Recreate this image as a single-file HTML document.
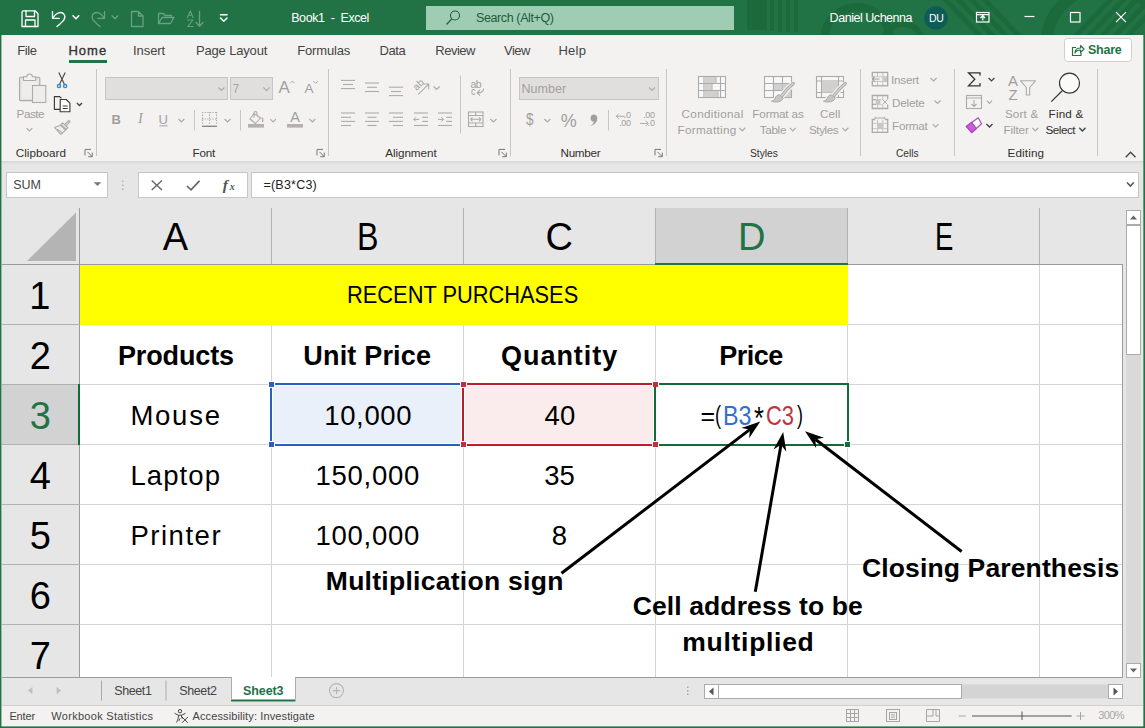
<!DOCTYPE html>
<html><head><meta charset="utf-8"><title>Book1 - Excel</title>
<style>
*{box-sizing:border-box;margin:0;padding:0}
html,body{width:1145px;height:728px;overflow:hidden;background:#f3f2f1}
body{font-family:"Liberation Sans",sans-serif;position:relative;color:#262626}
.abs,.t{position:absolute}
.t{white-space:pre;line-height:1;transform-origin:0 0}
#title{left:0;top:0;width:1145px;height:35px;background:#217346}
#tabs{left:0;top:35px;width:1145px;height:32px;background:#f3f2f1}
#ribbon{left:0;top:67px;width:1145px;height:94px;background:#f3f2f1}
#fbar{left:0;top:161px;width:1145px;height:48px;background:#e6e6e6}
#lb{left:0;top:35px;width:2px;height:693px;background:linear-gradient(90deg,#217346 0,#217346 1px,rgba(33,115,70,.45) 1px)}
#rb{left:1143px;top:35px;width:2px;height:693px;background:linear-gradient(90deg,rgba(33,115,70,.65) 0,rgba(33,115,70,.65) 1px,#217346 1px)}
#bb{left:0;top:726px;width:1145px;height:2px;background:linear-gradient(180deg,rgba(33,115,70,.6) 0,rgba(33,115,70,.6) 1px,#217346 1px)}
.w{color:#fff}
.g{color:#a6a6a6}
.box{position:absolute;background:#fff;border:1px solid #c6c6c6}
.sep{position:absolute;width:1px;background:#c8c8c8}
#grid{left:2px;top:209px;width:1121px;height:468px;background:#fff;overflow:hidden}
.hl{position:absolute;height:1px;background:#d4d4d4;left:79px;width:1044px}
.vl{position:absolute;width:1px;background:#d4d4d4;top:264px;height:413px}
.ch{position:absolute;top:209px;height:55px;background:#e6e6e6;border-right:1px solid #ababab}
.rh{position:absolute;left:2px;width:78px;height:60px;background:#e6e6e6;border-bottom:1px solid #ababab;border-right:1px solid #ababab}
.cell{font-family:"Liberation Sans",sans-serif;color:#000}
</style></head><body>
<div class="abs" id="title"></div>
<div class="abs" id="tabs"></div>
<div class="abs" id="ribbon"></div>
<div class="abs" id="fbar"></div>
<div class="abs" id="grid"></div>
<div class="abs" style="left:2px;top:208px;width:1121px;height:57px;background:#e6e6e6"></div>
<div class="abs" style="left:2px;top:264px;width:78px;height:413px;background:#e6e6e6"></div>
<div class="abs" style="left:656px;top:208px;width:191px;height:57px;background:#d2d2d2"></div>
<div class="abs" style="left:2px;top:385px;width:77px;height:59px;background:#d2d2d2"></div>
<!-- grid lines -->
<div class="hl" style="top:324px"></div><div class="hl" style="top:384px"></div><div class="hl" style="top:444px"></div>
<div class="hl" style="top:504px"></div><div class="hl" style="top:564px"></div><div class="hl" style="top:624px"></div>
<div class="vl" style="left:271px;top:324px;height:353px"></div><div class="vl" style="left:463px;top:324px;height:353px"></div>
<div class="vl" style="left:655px;top:324px;height:353px"></div><div class="vl" style="left:847px"></div><div class="vl" style="left:1039px"></div>
<div class="abs" style="left:80px;top:265px;width:768px;height:60px;background:#ffff00"></div>
<!-- header lines -->
<div class="abs" style="left:2px;top:264px;width:1121px;height:1px;background:#9b9b9b"></div>
<div class="abs" style="left:79px;top:208px;width:1px;height:469px;background:#9b9b9b"></div>
<div class="abs" style="left:271px;top:208px;width:1px;height:56px;background:#b1b1b1"></div>
<div class="abs" style="left:463px;top:208px;width:1px;height:56px;background:#b1b1b1"></div>
<div class="abs" style="left:655px;top:208px;width:1px;height:56px;background:#b1b1b1"></div>
<div class="abs" style="left:847px;top:208px;width:1px;height:56px;background:#b1b1b1"></div>
<div class="abs" style="left:1039px;top:208px;width:1px;height:56px;background:#b1b1b1"></div>
<div class="abs" style="left:2px;top:324px;width:78px;height:1px;background:#b1b1b1"></div>
<div class="abs" style="left:2px;top:384px;width:78px;height:1px;background:#b1b1b1"></div>
<div class="abs" style="left:2px;top:444px;width:78px;height:1px;background:#b1b1b1"></div>
<div class="abs" style="left:2px;top:504px;width:78px;height:1px;background:#b1b1b1"></div>
<div class="abs" style="left:2px;top:564px;width:78px;height:1px;background:#b1b1b1"></div>
<div class="abs" style="left:2px;top:624px;width:78px;height:1px;background:#b1b1b1"></div>
<!-- selected header accents -->
<div class="abs" style="left:655px;top:263px;width:193px;height:2px;background:#217346"></div>
<div class="abs" style="left:78px;top:384px;width:2px;height:61px;background:#126b38"></div>
<!-- B3 / C3 / D3 -->
<div class="abs" style="left:270px;top:383px;width:194px;height:63px;background:#e9f0fa;border:2px solid #2a5fc1;box-shadow:inset 0 0 0 1px #fff"></div>
<div class="abs" style="left:462px;top:383px;width:194px;height:63px;background:#faebec;border:2px solid #b81f2b;box-shadow:inset 0 0 0 1px #fff"></div>
<div class="abs" style="left:654px;top:383px;width:195px;height:63px;background:#fff;border:2px solid #126b38"></div>
<div class="abs" style="left:268px;top:381px;width:7px;height:7px;background:#2a5fc1;border:1px solid #fff"></div>
<div class="abs" style="left:268px;top:441px;width:7px;height:7px;background:#2a5fc1;border:1px solid #fff"></div>
<div class="abs" style="left:460px;top:381px;width:7px;height:7px;background:#c0303a;border:1px solid #fff"></div>
<div class="abs" style="left:460px;top:441px;width:7px;height:7px;background:#c0303a;border:1px solid #fff"></div>
<div class="abs" style="left:652px;top:381px;width:7px;height:7px;background:#c0303a;border:1px solid #fff"></div>
<div class="abs" style="left:652px;top:441px;width:7px;height:7px;background:#c0303a;border:1px solid #fff"></div>
<div class="abs" style="left:654px;top:387px;width:2px;height:54px;background:#126b38"></div>
<div class="abs" style="left:844px;top:441px;width:7px;height:7px;background:#126b38;border:1px solid #fff"></div>
<!-- bottom edge of grid & scrollbars -->
<div class="abs" style="left:2px;top:677px;width:1141px;height:28px;background:#e6e6e6"></div>
<div class="abs" style="left:2px;top:677px;width:1121px;height:1px;background:#9b9b9b"></div>
<div class="abs" style="left:1123px;top:208px;width:20px;height:469px;background:#e6e6e6"></div>
<div class="abs" style="left:1122px;top:264px;width:1px;height:414px;background:#9b9b9b"></div>
<div class="abs" style="left:1126px;top:210px;width:15px;height:15px;background:#fff;border:1px solid #ababab"></div>
<div class="abs" style="left:1126px;top:225px;width:15px;height:130px;background:#fff;border:1px solid #ababab"></div>
<div class="abs" style="left:1126px;top:355px;width:15px;height:308px;background:#d9d9d9"></div>
<div class="abs" style="left:1126px;top:663px;width:15px;height:15px;background:#fff;border:1px solid #ababab"></div>
<svg class="abs" style="left:0;top:0;overflow:hidden" width="1145" height="35" viewBox="0 0 1145 35" fill="none"><!-- title bar pattern -->
<g opacity=".6" stroke="#1a6437" fill="none">
<path d="M757 0v30" stroke-width="20"/><path d="M772 0v31 M780 0v32 M788 0v32 M796 0v32" stroke-width="4"/>
<circle cx="857" cy="40" r="33" stroke-width="8"/>
<circle cx="903" cy="44" r="20" stroke-width="6"/>
<path d="M944 -2 L982 38 M957 -2 L995 38 M970 -2 L1008 38 M983 -2 L1021 38" stroke-width="5"/>
<circle cx="1106" cy="46" r="60" stroke-width="12"/>
<path d="M1072 40 L1112 -2 M1085 40 L1125 -2 M1098 40 L1138 -2 M1111 40 L1151 -2 M1124 40 L1164 -2" stroke-width="5"/>
</g>
</svg>
<svg class="abs" style="left:0;top:0" width="1145" height="728" viewBox="0 0 1145 728" fill="none">
<!-- search box -->
<rect x="426" y="6" width="308" height="24" fill="#9fcdb3"/>
<g stroke="#1e5c3a" stroke-width="1.100"><circle cx="455" cy="15.500" r="4.500"/><path d="M451.800 19 L446.500 24.500"/></g>
<!-- QAT icons -->
<g stroke="#fff" stroke-width="1.300" stroke-linejoin="round" stroke-linecap="round">
<path d="M23.500 10.800 h11.500 l3 3 v12.700 h-16 v-14.200 a1.500 1.500 0 0 1 1.500 -1.500z"/>
<path d="M26 10.800 v5.700 h8.500 v-5.700 M25.500 26.500 v-6.500 h9.500 v6.500"/>
<path d="M52.500 11.500 v6.800 h6.800"/>
<path d="M52.800 18 C55.500 13 61.500 10.500 64.200 14.500 C66.500 18.500 63 21.500 57 26.500"/>
<path d="M73 15.800 l2.900 2.900 l2.900 -2.900" stroke-width="1.500"/>
<path d="M220.500 14.800 h6.500 M220.500 18 l3.250 3.200 l3.250 -3.200" stroke-width="1.500"/>
</g>
<g stroke="#fff" stroke-width="1.300" stroke-linejoin="round" stroke-linecap="round" opacity=".32">
<path d="M104.500 11.500 v6.800 h-6.800"/>
<path d="M104.200 18 C101.500 13 95.500 10.500 92.800 14.500 C90.500 18.500 94 21.500 100 26.500"/>
<path d="M112 15.800 l2.900 2.900 l2.900 -2.900"/>
<path d="M131.500 11.500 h7 l4.500 4.500 v10.500 h-11.500z M138.500 11.500 v4.500 h4.500"/>
<path d="M158.500 23.500 v-10 h5 l1.500 2 h6.500 v2 M158.500 23.500 l3.500 -6 h12 l-3.500 6z"/>
<path d="M199.500 11.500 v14.500 M196 22.500 l3.500 3.800 l3.500 -3.800"/>
<path d="M187.500 17.500 l2.800 -6.500 l2.800 6.500 M188.500 15.300 h3.700 M187.800 20 h5 l-5 6.500 h5.200" stroke-width="1.100"/>
</g>
<!-- window controls -->
<g stroke="#fff" stroke-width="1.200">
<rect x="976.500" y="12.500" width="12.500" height="9.500"/><path d="M976.500 14.700 h12.500 M982.800 20.500 v-4.500 M980.500 18 l2.300 -2.300 l2.300 2.300"/>
<path d="M1024.500 16.500 h10"/>
<rect x="1070.500" y="12.500" width="9.500" height="9.500"/>
<path d="M1116 12.200 l10 10 M1126 12.200 l-10 10"/>
</g>
<circle cx="936" cy="18" r="11.800" fill="#0f5c57"/>
<!-- share -->
<rect x="1064.500" y="38.500" width="67" height="23" rx="3" fill="#fff" stroke="#d2d0ce"/>
<g stroke="#217346" stroke-width="1.200" stroke-linejoin="round"><path d="M1076 47.500 h-3.500 v8 h8.500 v-2.500"/><path d="M1075 53 c0 -3.500 2 -5 5.500 -5 v-2.500 l3.500 3.500 l-3.500 3.500 v-2.500 c-2.500 0 -4.500 0.500 -5.500 3z"/></g>
<!-- home underline -->
<rect x="69" y="60" width="38" height="3" fill="#217346"/>
<path d="M96.5 69 V156" stroke="#c8c6c4" stroke-width="1"/>
<path d="M328.5 69 V156" stroke="#c8c6c4" stroke-width="1"/>
<path d="M510.5 69 V156" stroke="#c8c6c4" stroke-width="1"/>
<path d="M666.5 69 V156" stroke="#c8c6c4" stroke-width="1"/>
<path d="M860.5 69 V156" stroke="#c8c6c4" stroke-width="1"/>
<path d="M954.5 69 V156" stroke="#c8c6c4" stroke-width="1"/>
<path d="M1097.5 69 V156" stroke="#c8c6c4" stroke-width="1"/>
<path d="M194.5 110 V130.5" stroke="#c8c6c4" stroke-width="1"/>
<path d="M240.5 110 V130.5" stroke="#c8c6c4" stroke-width="1"/>
<path d="M608.5 110 V130.5" stroke="#c8c6c4" stroke-width="1"/>
<path d="M460.5 75.5 V133.5" stroke="#c8c6c4" stroke-width="1"/>
<rect x="105.500" y="77.500" width="122" height="22" fill="#e1dfdd" stroke="#c8c6c4"/>
<rect x="230.500" y="77.500" width="42" height="22" fill="#e1dfdd" stroke="#c8c6c4"/>
<rect x="519.500" y="77.500" width="139" height="22" fill="#e1dfdd" stroke="#c8c6c4"/>
<path d="M91.0 149.4 H85.0 V155.4 M87.5 151.9 L92.0 156.4 M92.3 152.6 V156.7 H88.2" stroke="#777" stroke-width="1" fill="none"/>
<path d="M323.0 149.4 H317.0 V155.4 M319.5 151.9 L324.0 156.4 M324.3 152.6 V156.7 H320.2" stroke="#777" stroke-width="1" fill="none"/>
<path d="M505.0 149.4 H499.0 V155.4 M501.5 151.9 L506.0 156.4 M506.3 152.6 V156.7 H502.2" stroke="#777" stroke-width="1" fill="none"/>
<path d="M661.0 149.4 H655.0 V155.4 M657.5 151.9 L662.0 156.4 M662.3 152.6 V156.7 H658.2" stroke="#777" stroke-width="1" fill="none"/>
<path d="M26.5 128.1 L29.4 130.9 L32.3 128.1" stroke="#ababab" stroke-width="1.2" fill="none"/>
<path d="M76.9 103.0 L79.5 105.6 L82.0 103.0" stroke="#444" stroke-width="1.4" fill="none"/>
<path d="M218.5 87.5 L221.4 90.5 L224.4 87.5" stroke="#ababab" stroke-width="1.2" fill="none"/>
<path d="M263.4 87.4 L266.5 90.6 L269.7 87.4" stroke="#ababab" stroke-width="1.2" fill="none"/>
<path d="M178.5 119.0 L181.4 122.0 L184.3 119.0" stroke="#ababab" stroke-width="1.2" fill="none"/>
<path d="M224.6 119.0 L227.6 122.0 L230.5 119.0" stroke="#ababab" stroke-width="1.2" fill="none"/>
<path d="M270.3 119.1 L273.1 121.9 L276.0 119.1" stroke="#ababab" stroke-width="1.2" fill="none"/>
<path d="M309.3 119.0 L312.4 122.0 L315.4 119.0" stroke="#ababab" stroke-width="1.2" fill="none"/>
<path d="M433.6 86.5 L436.6 89.5 L439.7 86.5" stroke="#ababab" stroke-width="1.2" fill="none"/>
<path d="M490.3 119.0 L493.4 122.0 L496.5 119.0" stroke="#ababab" stroke-width="1.2" fill="none"/>
<path d="M649.0 87.5 L652.0 90.5 L655.0 87.5" stroke="#ababab" stroke-width="1.2" fill="none"/>
<path d="M544.3 119.0 L547.3 122.0 L550.4 119.0" stroke="#ababab" stroke-width="1.2" fill="none"/>
<path d="M739.2 127.8 L742.2 130.8 L745.3 127.8" stroke="#ababab" stroke-width="1.2" fill="none"/>
<path d="M789.9 127.8 L792.8 130.8 L795.7 127.8" stroke="#ababab" stroke-width="1.2" fill="none"/>
<path d="M842.3 127.8 L845.3 130.8 L848.4 127.8" stroke="#ababab" stroke-width="1.2" fill="none"/>
<path d="M930.6 78.0 L933.6 81.0 L936.6 78.0" stroke="#ababab" stroke-width="1.2" fill="none"/>
<path d="M934.5 100.5 L937.5 103.5 L940.6 100.5" stroke="#ababab" stroke-width="1.2" fill="none"/>
<path d="M932.7 124.1 L935.6 126.9 L938.5 124.1" stroke="#ababab" stroke-width="1.2" fill="none"/>
<path d="M988.6 78.1 L991.5 80.9 L994.4 78.1" stroke="#444" stroke-width="1.4" fill="none"/>
<path d="M986.9 100.7 L989.5 103.3 L992.0 100.7" stroke="#ababab" stroke-width="1.2" fill="none"/>
<path d="M986.4 124.0 L989.5 127.0 L992.5 124.0" stroke="#444" stroke-width="1.4" fill="none"/>
<path d="M1032.3 127.8 L1035.3 130.8 L1038.4 127.8" stroke="#ababab" stroke-width="1.2" fill="none"/>
<path d="M1079.3 127.8 L1082.4 130.9 L1085.5 127.8" stroke="#444" stroke-width="1.4" fill="none"/>
<path d="M1125.700 157.300 L1130.600 152.300 L1135.500 157.300" stroke="#444" stroke-width="1.300" fill="none"/>
<g stroke="#ababab" stroke-width="1.100"><rect x="19.500" y="77.300" width="20.300" height="23.300" rx="1" fill="#e4e2e0"/><rect x="21.700" y="79.500" width="16" height="19" fill="#efedec" stroke="none"/><path d="M23.500 80.500 v-3.700 h3.300 a2.800 2.800 0 0 1 5.600 0 h3.300 v3.700z" fill="#f3f2f1"/><rect x="32.500" y="85.500" width="13.300" height="17" fill="#efedec"/></g>
<g stroke="#444" stroke-width="1.100" fill="none"><path d="M58.800 72.500 L64.300 84 M65.200 72.500 L59.700 84"/></g><g stroke="#2b88d8" stroke-width="1.300" fill="none"><circle cx="59" cy="86.100" r="1.600"/><circle cx="65.100" cy="86.100" r="1.600"/></g>
<g stroke="#3b3a39" stroke-width="1.150" fill="#f3f2f1" stroke-linejoin="round"><path d="M60 109.300 h-5.600 v-12.700 h5.200 l1.800 1.800"/><path d="M60.200 99.500 h6 l3.700 3.700 v8.600 h-9.700z" fill="#fff"/><path d="M62.700 106 h5 M62.700 108.500 h5" stroke-width="1"/></g>
<g stroke="#ababab" stroke-width="1.100" fill="#e4e2e0" stroke-linejoin="round"><path d="M68.800 120.300 l1.300 1.300 l-4.300 4.600 l-1.500 -1.400z" /><path d="M62.600 122.800 l5.300 4.800 l-1.700 1.900 l-5.300 -4.800z"/><path d="M60.500 125.300 l5.200 4.700 l-4.700 4.400 c-1.500 -1.500 -4.500 -5 -6.500 -6.900z" fill="#efedec"/><path d="M57 129.300 l5.500 3.600" fill="none"/></g>
<path d="M159.300 125.800 H167.700" stroke="#ababab" stroke-width="1.100"/>
<path d="M290.300 83.300 l2.100 -2.200 l2.100 2.200 M313.300 81 l2.400 2.400 l2.400 -2.400" stroke="#ababab" stroke-width="1" fill="none"/>
<g stroke="#ababab" stroke-width="1.100"><path d="M202 112.500 H217 M202 119 H217 M202.500 112 V125 M209.500 112 V125 M216.500 112 V125" stroke-dasharray="1.300 1.300"/><path d="M202 126.300 H217" stroke-width="1.400" stroke="#8a8a8a"/></g>
<g stroke="#ababab" stroke-width="1.100" fill="none" stroke-linejoin="round"><path d="M254 113.500 l6.500 4.500 l-5 5.500 l-5.500 -4.500z"/><path d="M254 117.500 v-4.500 a1.500 1.500 0 0 1 3 0 v2"/><path d="M261.500 117.500 c1.500 1 1.800 2.800 1 4.500"/></g><rect x="248" y="124" width="16" height="3.600" fill="#b3b0ad"/>
<rect x="287" y="124" width="16" height="3.600" fill="#b3b0ad"/>
<path d="M341.0 80.4 H355.0" stroke="#ababab" stroke-width="1.1"/>
<path d="M343.0 84.5 H353.0" stroke="#ababab" stroke-width="1.1"/>
<path d="M341.0 88.6 H355.0" stroke="#ababab" stroke-width="1.1"/>
<path d="M365.0 83.0 H379.0" stroke="#ababab" stroke-width="1.1"/>
<path d="M367.0 87.3 H377.0" stroke="#ababab" stroke-width="1.1"/>
<path d="M365.0 91.5 H379.0" stroke="#ababab" stroke-width="1.1"/>
<path d="M389.0 87.2 H403.0" stroke="#ababab" stroke-width="1.1"/>
<path d="M391.0 91.5 H401.0" stroke="#ababab" stroke-width="1.1"/>
<path d="M389.0 95.6 H403.0" stroke="#ababab" stroke-width="1.1"/>
<path d="M341.0 113.0 H355.0" stroke="#ababab" stroke-width="1.1"/>
<path d="M341.0 117.3 H351.0" stroke="#ababab" stroke-width="1.1"/>
<path d="M341.0 121.4 H355.0" stroke="#ababab" stroke-width="1.1"/>
<path d="M341.0 125.5 H351.0" stroke="#ababab" stroke-width="1.1"/>
<path d="M365.0 113.0 H379.0" stroke="#ababab" stroke-width="1.1"/>
<path d="M367.5 117.3 H376.5" stroke="#ababab" stroke-width="1.1"/>
<path d="M365.0 121.4 H379.0" stroke="#ababab" stroke-width="1.1"/>
<path d="M367.5 125.5 H376.5" stroke="#ababab" stroke-width="1.1"/>
<path d="M389.0 113.0 H403.0" stroke="#ababab" stroke-width="1.1"/>
<path d="M393.0 117.3 H403.0" stroke="#ababab" stroke-width="1.1"/>
<path d="M389.0 121.4 H403.0" stroke="#ababab" stroke-width="1.1"/>
<path d="M393.0 125.5 H403.0" stroke="#ababab" stroke-width="1.1"/>
<path d="M414.0 113.0 H428.0" stroke="#ababab" stroke-width="1.1"/>
<path d="M422.2 117.3 H428.0" stroke="#ababab" stroke-width="1.1"/>
<path d="M422.2 121.4 H428.0" stroke="#ababab" stroke-width="1.1"/>
<path d="M414.0 125.5 H428.0" stroke="#ababab" stroke-width="1.1"/>
<path d="M438.0 113.0 H452.0" stroke="#ababab" stroke-width="1.1"/>
<path d="M446.2 117.3 H452.0" stroke="#ababab" stroke-width="1.1"/>
<path d="M446.2 121.4 H452.0" stroke="#ababab" stroke-width="1.1"/>
<path d="M438.0 125.5 H452.0" stroke="#ababab" stroke-width="1.1"/>
<path d="M413.800 119.400 h5.500 m-5.500 0 l2.200 -2.200 m-2.200 2.200 l2.200 2.200 M438 119.400 h5.500 m0 0 l-2.200 -2.200 m2.200 2.200 l-2.200 2.200" stroke="#ababab" stroke-width="1" fill="none"/>
<path d="M418.300 94.300 L428.600 84.200 M423.500 84 h5.200 v5.200" stroke="#ababab" stroke-width="1.100" fill="none"/>
<path d="M477.300 92.800 c3.500 0.300 6.200 -1 6.300 -4.300 M480 90 l-2.800 2.800 l2.800 2.800" stroke="#ababab" stroke-width="1.100" fill="none"/>
<g stroke="#ababab" stroke-width="1.100" fill="none"><rect x="468.500" y="112" width="14.500" height="14.500"/><path d="M468.500 115.500 h14.500 M468.500 123 h14.500 M475.700 112 v3.500 M475.700 123 v3.500 M470.500 119.300 h10.500 m-10.500 0 l2 -2 m-2 2 l2 2 m8.500 -2 l-2 -2 m2 2 l-2 2"/></g>
<path d="M616.200 116.300 h8.500 m-8.500 0 l2.600 -2.600 m-2.600 2.600 l2.600 2.600 M640 123.400 h8.300 m0 0 l-2.600 -2.600 m2.600 2.600 l-2.600 2.600" stroke="#ababab" stroke-width="1" fill="none"/>
<path d="M593.500 114.400 a3.700 3.700 0 0 1 3.800 3.900 c0 4 -3 6.800 -7.300 8 c2.200 -1.500 3.600 -3 3.900 -4.600 a3.700 3.700 0 0 1 -0.400 -7.300z" fill="#a19f9d"/>
<g stroke="#ababab" stroke-width="1.100" fill="#f7f7f7"><rect x="698.5" y="76.5" width="27" height="21"/><path d="M704.0 76.5 v21 M720.5 76.5 v21 M698.5 83.5 h27 M698.5 90.5 h27 "/></g>
<path d="M704.500 77 h11 v6 h-11z M704.500 84 h7 v6 h-7z M704.500 91 h13 v6 h-13z" fill="#d2d0ce"/>
<path d="M716 77 v6.500 M712 84 v6.500 M718 91 v6" stroke="#ababab" stroke-width="1"/>
<g stroke="#ababab" stroke-width="1.100" fill="#f7f7f7"><rect x="764.5" y="76.5" width="27" height="21"/><path d="M773.5 76.5 v21 M782.5 76.5 v21 M764.5 83.5 h27 M764.5 90.5 h27 "/></g>
<path d="M774 84 h8.500 v6 h-8.500z M783 84 h8 v6 h-8z M783 91 h8 v6 h-8z" fill="#d2d0ce"/>
<g stroke="#ababab" stroke-width="1.100" fill="#f7f7f7"><rect x="816.5" y="76.5" width="27" height="21"/><path d="M821.5 76.5 v21 M838.5 76.5 v21 M816.5 81.0 h27 M816.5 92.5 h27 "/></g>
<path d="M822 81.500 h16 v11 h-16z" fill="#d2d0ce"/>
<g transform="translate(0 0)"><path d="M793 84 Q787 89 781 97" stroke="#f3f2f1" stroke-width="6" fill="none"/><path d="M779 95 l4 3.500 c-1.500 4 -7 5 -12 3 z" fill="#f3f2f1" stroke="#f3f2f1" stroke-width="2.500"/><path d="M793.300 83.500 Q786.500 89 781.300 96.500" stroke="#ababab" stroke-width="3.400" fill="none" stroke-linecap="round"/><path d="M793.300 83.500 Q786.500 89 781.300 96.500" stroke="#d4d2d0" stroke-width="1.500" fill="none" stroke-linecap="round"/><path d="M779.300 94.800 l4 3.300 c-1.500 3.800 -6.500 4.700 -11.800 3.200 c2.500 -0.600 3.300 -1.800 3.800 -3.300 c0.600 -1.800 2 -3 4 -3.200z" fill="#c8c6c4" stroke="#ababab" stroke-width="1"/></g>
<g transform="translate(52 0)"><path d="M793 84 Q787 89 781 97" stroke="#f3f2f1" stroke-width="6" fill="none"/><path d="M779 95 l4 3.500 c-1.500 4 -7 5 -12 3 z" fill="#f3f2f1" stroke="#f3f2f1" stroke-width="2.500"/><path d="M793.300 83.500 Q786.500 89 781.300 96.500" stroke="#ababab" stroke-width="3.400" fill="none" stroke-linecap="round"/><path d="M793.300 83.500 Q786.500 89 781.300 96.500" stroke="#d4d2d0" stroke-width="1.500" fill="none" stroke-linecap="round"/><path d="M779.300 94.800 l4 3.300 c-1.500 3.800 -6.500 4.700 -11.800 3.200 c2.500 -0.600 3.300 -1.800 3.800 -3.300 c0.600 -1.800 2 -3 4 -3.200z" fill="#c8c6c4" stroke="#ababab" stroke-width="1"/></g>
<g fill="none"><path d="M877.500 72.500 v13.500 M882.800 72.500 v13.500 M872.500 76.800 h15 M872.500 81.500 h15" stroke="#c8c6c4" stroke-width="1"/><rect x="883.300" y="77.300" width="4" height="3.800" fill="#c8c6c4"/><rect x="872.300" y="72.400" width="15.400" height="13.400" stroke="#ababab" stroke-width="1.300"/><rect x="871" y="77.300" width="10" height="3.400" fill="#f3f2f1"/><path d="M872.300 79 h7.200 m-7.200 0 l2.300 -2.300 m-2.300 2.300 l2.300 2.300" stroke="#a19f9d" stroke-width="1.200"/></g>
<g fill="none"><path d="M877.500 95.500 v13 M882.800 95.500 v4 M882.800 104.500 v4 M872.500 99.700 h9 M872.500 104.300 h9" stroke="#c8c6c4" stroke-width="1"/><rect x="875.800" y="99.700" width="4.600" height="4.600" fill="#c8c6c4"/><path d="M887.700 99 v-3.500 h-15.400 v13 h15.400 v-3.500" stroke="#ababab" stroke-width="1.300"/><path d="M872.300 99.700 h3.500 M872.300 104.300 h3.500" stroke="#ababab" stroke-width="1.300"/><path d="M882.300 99.300 l5.300 5.300 m0 -5.300 l-5.300 5.300" stroke="#ababab" stroke-width="1"/></g>
<g fill="none"><path d="M877.500 119.500 v13 M882.800 119.500 v13 M872.500 123.300 h15 M872.500 128.600 h15" stroke="#c8c6c4" stroke-width="1"/><rect x="877" y="123.300" width="6.300" height="5.300" fill="#c8c6c4"/><path d="M875 119.500 h-2.700 v12.900 h15.400 v-12.900 h-2.700" stroke="#ababab" stroke-width="1.300"/><path d="M875.200 118 h9.500 M875.200 116.800 v2.400 M884.700 116.800 v2.400" stroke="#ababab" stroke-width="1"/></g>
<path d="M980 75.500 v-2.700 h-11.500 l6.300 6.500 l-6.300 6.500 h11.500 v-2.700" stroke="#333" stroke-width="1.300" fill="none" stroke-linejoin="miter"/>
<g stroke="#ababab" stroke-width="1.100" fill="none"><rect x="966.500" y="95.500" width="15" height="13"/><path d="M966.500 98 h15 M974 100 v6.500 m0 0 l-2.500 -2.500 m2.500 2.500 l2.500 -2.500"/></g>
<g stroke="#b146c2" stroke-width="1.200" stroke-linejoin="round"><path d="M978.300 117.800 L981.500 123.800 L971.800 132.500 L966.300 126.400z" fill="#fff"/><path d="M971.700 122.300 L976.300 128.500 L971.800 132.500 L966.300 126.400z" fill="#c760d6"/></g>
<path d="M1020.500 80.800 h15 l-5.800 6.700 v7.500 l-3.400 0 v-7.500z" stroke="#ababab" stroke-width="1.100" fill="none" stroke-linejoin="round"/>
<circle cx="1069.500" cy="83.200" r="10" stroke="#333" stroke-width="1.200" fill="#fafafa"/><path d="M1062 91 L1051.300 101.600" stroke="#333" stroke-width="1.200"/>
<!-- formula bar -->
<rect x="6.500" y="172.500" width="101" height="25" fill="#fff" stroke="#c6c6c6"/>
<path d="M93.700 182.300 h7.600 l-3.800 3.800z" fill="#777"/>
<g fill="#b0b0b0"><rect x="122" y="180.500" width="1.500" height="1.500"/><rect x="122" y="184.500" width="1.500" height="1.500"/><rect x="122" y="188.500" width="1.500" height="1.500"/></g>
<rect x="138.500" y="172.500" width="109" height="25" fill="#fff" stroke="#c6c6c6"/>
<rect x="251.500" y="172.500" width="887" height="25" fill="#fff" stroke="#c6c6c6"/>
<path d="M151.700 180.500 l10.300 9.500 M162 180.500 l-10.300 9.500" stroke="#666" stroke-width="1.400"/>
<path d="M187 186 l4 3.800 l8.500 -9" stroke="#666" stroke-width="1.700" fill="none"/>
<path d="M1127 182.500 l3.400 3.500 l3.400 -3.500" stroke="#555" stroke-width="1.600" fill="none"/>
<!-- corner triangle -->
<path d="M76 212.500 V261 H27z" fill="#b4b4b4"/>
<!-- v scroll arrows -->
<path d="M1130 219.500 h7 l-3.500 -4z M1130 668.500 h7 l-3.500 4z" fill="#666"/>
<!-- sheet tab bar -->
<path d="M32.400 687 v7.200 l-4.600 -3.600z M56.600 687 v7.200 l4.600 -3.600z" fill="#c0c0c0"/>
<path d="M101.500 680.500 V700.500 M166 680.500 V700.500" stroke="#ababab"/>
<rect x="231" y="677" width="64.500" height="24.500" fill="#fff"/>
<rect x="231" y="699.500" width="64.500" height="2" fill="#217346"/>
<path d="M231.500 677 V699.500 M295.500 677 V699.500" stroke="#ababab"/>
<g stroke="#b5b5b5" stroke-width="1.100" fill="none"><circle cx="336.500" cy="690.600" r="7"/><path d="M332.800 690.600 h7.400 M336.500 686.900 v7.400"/></g>
<g fill="#a8a8a8"><rect x="687" y="686.500" width="1.500" height="1.500"/><rect x="687" y="690" width="1.500" height="1.500"/><rect x="687" y="693.500" width="1.500" height="1.500"/></g>
<rect x="718.500" y="684.500" width="390" height="14" fill="#d4d4d4" stroke="none"/>
<rect x="704.500" y="684.500" width="14" height="14" fill="#fff" stroke="#ababab"/>
<rect x="718.500" y="684.500" width="243" height="14" fill="#fff" stroke="#ababab"/>
<rect x="1108.500" y="684.500" width="14" height="14" fill="#fff" stroke="#ababab"/>
<path d="M713.500 687.500 v8 l-4.500 -4z M1113.500 687.500 v8 l4.500 -4z" fill="#555"/>
<!-- status bar -->
<rect x="2" y="706" width="1141" height="21" fill="#f3f2f1"/><rect x="2" y="705" width="1141" height="1" fill="#d0d0d0"/>
<g stroke="#444" stroke-width="1" fill="none" stroke-linejoin="round"><circle cx="180" cy="711.200" r="1.700"/><path d="M174.500 713.200 c2 1.300 3.300 1.600 4 2 c0.300 2 -0.800 5 -2 7.300 M185.500 713.200 c-2 1.300 -3.300 1.600 -4 2 c-0.200 1.500 0.200 2.500 0.800 3.500 M178.500 715.200 h3 M182 717 l5.800 5.800 m0 -5.800 l-5.800 5.800 M180 718.500 l-1.200 2.500"/></g>
<g stroke="#a6a6a6" stroke-width="1" fill="none">
<rect x="846.500" y="709.500" width="12" height="12"/><path d="M846.500 713.500 h12 M846.500 717.500 h12 M850.500 709.500 v12 M854.500 709.500 v12"/>
<rect x="886.500" y="709.500" width="13" height="12"/><rect x="889.500" y="712.500" width="7" height="7"/><path d="M891 714.500 h4 M891 716 h4 M891 717.500 h4" stroke-width=".7"/>
<path d="M926.500 709.500 h13 v12 h-13z M933 709.500 v6.500 h-6.500 M936 709.500 v6.500 h3.500"/>
<path d="M958.600 716 h7.200 M1076.500 716 h8 M1080.500 712 v8"/>
</g>
<path d="M972 716 H1071.700 M1022 711.500 V720" stroke="#555" stroke-width="1"/>
<!-- ribbon bottom shadow -->
<rect x="0" y="161" width="1145" height="1" fill="#d8d8d8"/>
<rect x="0" y="162" width="1145" height="1" fill="#dddddd"/>
<rect x="0" y="163" width="1145" height="1" fill="#e2e2e2"/>
</svg>
<span class="abs" style="left:412.6px;top:79.8px;font-size:10px;line-height:1;color:#a19f9d;transform:rotate(-45deg);transform-origin:50% 50%;white-space:nowrap">ab</span>
<span class="t" id="t0" style="left:291.20px;top:11.82px;font-size:12.5px;letter-spacing:-0.420px;color:#fff;">Book1  -  Excel</span>
<span class="t" id="t1" style="left:476.00px;top:11.82px;font-size:12.5px;letter-spacing:-0.389px;color:#1e5c3a;">Search (Alt+Q)</span>
<span class="t" id="t2" style="left:829.60px;top:11.82px;font-size:12.5px;letter-spacing:-0.461px;color:#fff;">Daniel Uchenna</span>
<span class="t" id="t3" style="left:928.90px;top:12.91px;font-size:10.5px;letter-spacing:-0.283px;color:#fff;">DU</span>
<span class="t" id="t4" style="left:17.30px;top:44.40px;font-size:13px;letter-spacing:-0.439px;color:#444;">File</span>
<span class="t" id="t5" style="left:133.00px;top:44.40px;font-size:13px;letter-spacing:-0.060px;color:#444;">Insert</span>
<span class="t" id="t6" style="left:196.00px;top:44.40px;font-size:13px;letter-spacing:-0.169px;color:#444;">Page Layout</span>
<span class="t" id="t7" style="left:297.30px;top:44.40px;font-size:13px;letter-spacing:-0.182px;color:#444;">Formulas</span>
<span class="t" id="t8" style="left:379.40px;top:44.40px;font-size:13px;letter-spacing:-0.343px;color:#444;">Data</span>
<span class="t" id="t9" style="left:435.30px;top:44.40px;font-size:13px;letter-spacing:-0.507px;color:#444;">Review</span>
<span class="t" id="t10" style="left:504.00px;top:44.40px;font-size:13px;letter-spacing:-0.518px;color:#444;">View</span>
<span class="t" id="t11" style="left:558.50px;top:44.40px;font-size:13px;letter-spacing:0.231px;color:#444;">Help</span>
<span class="t" id="t12" style="left:68.40px;top:44.40px;font-size:13px;letter-spacing:1.051px;color:#333;-webkit-text-stroke:.35px #333;">Home</span>
<span class="t" id="t13" style="left:1087.90px;top:43.72px;font-size:12.5px;letter-spacing:-0.222px;color:#217346;font-weight:bold;">Share</span>
<span class="t" id="t14" style="left:16.60px;top:107.50px;font-size:11.7px;letter-spacing:-0.497px;color:#a19f9d;">Paste</span>
<span class="t" id="t15" style="left:15.70px;top:146.80px;font-size:11.7px;letter-spacing:0.034px;color:#323130;">Clipboard</span>
<span class="t" id="t16" style="left:192.60px;top:146.80px;font-size:11.7px;letter-spacing:-0.280px;color:#323130;">Font</span>
<span class="t" id="t17" style="left:385.20px;top:146.80px;font-size:11.7px;letter-spacing:-0.066px;color:#323130;">Alignment</span>
<span class="t" id="t18" style="left:560.50px;top:146.80px;font-size:11.7px;letter-spacing:-0.295px;color:#323130;">Number</span>
<span class="t" id="t19" style="left:749.70px;top:146.80px;font-size:11.7px;color:#323130;transform:scaleX(0.8755);">Styles</span>
<span class="t" id="t20" style="left:895.50px;top:146.80px;font-size:11.7px;color:#323130;transform:scaleX(0.8686);">Cells</span>
<span class="t" id="t21" style="left:1007.50px;top:146.80px;font-size:11.7px;letter-spacing:0.144px;color:#323130;">Editing</span>
<span class="t" id="t22" style="left:233.30px;top:83.22px;font-size:12.5px;color:#a19f9d;transform:scaleX(0.8571);">7</span>
<span class="t" id="t23" style="left:111.50px;top:112.50px;font-size:13px;color:#a19f9d;font-weight:bold;">B</span>
<span class="t" id="t24" style="left:138.05px;top:111.23px;font-size:14.5px;color:#a19f9d;font-style:italic;font-family:'Liberation Serif',serif;">I</span>
<span class="t" id="t25" style="left:158.50px;top:112.50px;font-size:13px;color:#a19f9d;">U</span>
<span class="t" id="t26" style="left:278.50px;top:78.61px;font-size:17px;color:#a19f9d;">A</span>
<span class="t" id="t27" style="left:304.55px;top:81.57px;font-size:13.5px;color:#a19f9d;">A</span>
<span class="t" id="t28" style="left:290.20px;top:110.33px;font-size:14.5px;color:#a19f9d;">A</span>
<span class="t" id="t29" style="left:470.50px;top:78.51px;font-size:10.5px;letter-spacing:-0.640px;color:#a19f9d;">ab</span>
<span class="t" id="t30" style="left:470.60px;top:85.61px;font-size:10.5px;color:#a19f9d;transform:scaleX(0.8800);">c</span>
<span class="t" id="t31" style="left:623.50px;top:110.98px;font-size:9px;letter-spacing:-0.000px;color:#a19f9d;">.0</span>
<span class="t" id="t32" style="left:618.90px;top:119.28px;font-size:9px;letter-spacing:-0.203px;color:#a19f9d;">.00</span>
<span class="t" id="t33" style="left:642.90px;top:110.98px;font-size:9px;letter-spacing:-0.203px;color:#a19f9d;">.00</span>
<span class="t" id="t34" style="left:647.50px;top:119.28px;font-size:9px;letter-spacing:-0.000px;color:#a19f9d;">.0</span>
<span class="t" id="t35" style="left:521.50px;top:83.12px;font-size:12.5px;letter-spacing:0.041px;color:#a19f9d;">Number</span>
<span class="t" id="t36" style="left:525.60px;top:111.76px;font-size:16px;color:#a19f9d;transform:scaleX(0.8556);">$</span>
<span class="t" id="t37" style="left:560.80px;top:111.76px;font-size:18px;color:#a19f9d;">%</span>
<span class="t" id="t38" style="left:681.60px;top:107.50px;font-size:11.7px;letter-spacing:0.322px;color:#a19f9d;">Conditional</span>
<span class="t" id="t39" style="left:677.60px;top:123.60px;font-size:11.7px;letter-spacing:0.305px;color:#a19f9d;">Formatting</span>
<span class="t" id="t40" style="left:752.30px;top:107.50px;font-size:11.7px;letter-spacing:-0.145px;color:#a19f9d;">Format as</span>
<span class="t" id="t41" style="left:759.70px;top:123.60px;font-size:11.7px;letter-spacing:-0.310px;color:#a19f9d;">Table</span>
<span class="t" id="t42" style="left:820.00px;top:107.50px;font-size:11.7px;letter-spacing:0.054px;color:#a19f9d;">Cell</span>
<span class="t" id="t43" style="left:809.00px;top:123.60px;font-size:11.7px;letter-spacing:-0.437px;color:#a19f9d;">Styles</span>
<span class="t" id="t44" style="left:891.00px;top:73.60px;font-size:11.7px;letter-spacing:-0.237px;color:#a19f9d;">Insert</span>
<span class="t" id="t45" style="left:892.00px;top:96.90px;font-size:11.7px;letter-spacing:-0.217px;color:#a19f9d;">Delete</span>
<span class="t" id="t46" style="left:892.00px;top:119.90px;font-size:11.7px;letter-spacing:-0.233px;color:#a19f9d;">Format</span>
<span class="t" id="t47" style="left:1007.90px;top:72.90px;font-size:15px;color:#a19f9d;">A</span>
<span class="t" id="t48" style="left:1008.50px;top:86.90px;font-size:15px;color:#a19f9d;">Z</span>
<span class="t" id="t49" style="left:1004.90px;top:107.50px;font-size:11.7px;letter-spacing:0.164px;color:#a19f9d;">Sort &amp;</span>
<span class="t" id="t50" style="left:1003.50px;top:123.60px;font-size:11.7px;letter-spacing:-0.116px;color:#a19f9d;">Filter</span>
<span class="t" id="t51" style="left:1048.60px;top:107.60px;font-size:11.7px;letter-spacing:0.163px;color:#323130;">Find &amp;</span>
<span class="t" id="t52" style="left:1045.40px;top:123.70px;font-size:11.7px;letter-spacing:-0.467px;color:#323130;">Select</span>
<span class="t" id="t53" style="left:13.20px;top:179.22px;font-size:12.5px;letter-spacing:-0.032px;color:#444;">SUM</span>
<span class="t" id="t54" style="left:263.40px;top:179.22px;font-size:12.5px;letter-spacing:0.229px;color:#222;">=(B3*C3)</span>
<span class="t" id="t55" style="left:222.75px;top:177.18px;font-size:15.5px;color:#555;font-style:italic;font-weight:bold;font-family:'Liberation Serif',serif;">f</span>
<span class="t" id="t56" style="left:229.75px;top:181.84px;font-size:10px;color:#555;font-style:italic;font-weight:bold;font-family:'Liberation Serif',serif;">x</span>
<span class="t" id="t57" style="left:162.75px;top:218.13px;font-size:38px;color:#000;">A</span>
<span class="t" id="t58" style="left:356.76px;top:218.13px;font-size:38px;color:#000;transform:scaleX(0.8476);">B</span>
<span class="t" id="t59" style="left:545.55px;top:218.13px;font-size:38px;color:#000;">C</span>
<span class="t" id="t60" style="left:934.93px;top:218.13px;font-size:38px;color:#000;transform:scaleX(0.7238);">E</span>
<span class="t" id="t61" style="left:737.90px;top:218.13px;font-size:38px;color:#217346;">D</span>
<span class="t" id="t62" style="left:29.20px;top:277.33px;font-size:38px;color:#000;">1</span>
<span class="t" id="t63" style="left:29.70px;top:337.33px;font-size:38px;color:#000;">2</span>
<span class="t" id="t64" style="left:29.70px;top:397.33px;font-size:38px;color:#217346;">3</span>
<span class="t" id="t65" style="left:29.70px;top:457.33px;font-size:38px;color:#000;">4</span>
<span class="t" id="t66" style="left:29.70px;top:517.33px;font-size:38px;color:#000;">5</span>
<span class="t" id="t67" style="left:29.70px;top:577.33px;font-size:38px;color:#000;">6</span>
<span class="t" id="t68" style="left:29.70px;top:637.33px;font-size:38px;color:#000;">7</span>
<span class="t" id="t69" style="left:347.12px;top:283.26px;font-size:24.5px;color:#000;transform:scaleX(0.8907);">RECENT PURCHASES</span>
<span class="t" id="t70" style="left:118.00px;top:342.54px;font-size:27px;letter-spacing:-0.143px;color:#000;font-weight:bold;">Products</span>
<span class="t" id="t71" style="left:303.30px;top:342.54px;font-size:27px;letter-spacing:0.187px;color:#000;font-weight:bold;">Unit Price</span>
<span class="t" id="t72" style="left:501.00px;top:342.54px;font-size:27px;letter-spacing:0.959px;color:#000;font-weight:bold;">Quantity</span>
<span class="t" id="t73" style="left:719.30px;top:342.54px;font-size:27px;letter-spacing:-0.533px;color:#000;font-weight:bold;">Price</span>
<span class="t" id="t74" style="left:130.40px;top:401.92px;font-size:27.5px;letter-spacing:1.763px;color:#000;">Mouse</span>
<span class="t" id="t75" style="left:324.30px;top:401.92px;font-size:27.5px;letter-spacing:0.617px;color:#000;">10,000</span>
<span class="t" id="t76" style="left:544.60px;top:401.92px;font-size:27.5px;letter-spacing:0.106px;color:#000;">40</span>
<span class="t" id="t77" style="left:130.40px;top:462.02px;font-size:27.5px;letter-spacing:1.097px;color:#000;">Laptop</span>
<span class="t" id="t78" style="left:315.60px;top:462.02px;font-size:27.5px;letter-spacing:0.698px;color:#000;">150,000</span>
<span class="t" id="t79" style="left:544.15px;top:462.02px;font-size:27.5px;color:#000;">35</span>
<span class="t" id="t80" style="left:130.40px;top:521.72px;font-size:27.5px;letter-spacing:1.527px;color:#000;">Printer</span>
<span class="t" id="t81" style="left:315.60px;top:521.72px;font-size:27.5px;letter-spacing:0.698px;color:#000;">100,000</span>
<span class="t" id="t82" style="left:551.80px;top:521.72px;font-size:27.5px;color:#000;">8</span>
<span class="t" id="t83" style="left:700.40px;top:403.84px;font-size:25px;color:#000;">=</span>
<span class="t" id="t84" style="left:715.30px;top:402.49px;font-size:26px;color:#000;transform:scaleX(0.7000);">(</span>
<span class="t" id="t85" style="left:723.20px;top:401.72px;font-size:27.5px;color:#2f6fd0;transform:scaleX(0.8487);">B3</span>
<span class="t" id="t86" style="left:754.40px;top:401.91px;font-size:32px;color:#000;transform:scaleX(0.8000);">*</span>
<span class="t" id="t87" style="left:766.20px;top:401.72px;font-size:27.5px;color:#c0353f;transform:scaleX(0.7974);">C3</span>
<span class="t" id="t88" style="left:796.70px;top:402.49px;font-size:26px;color:#000;transform:scaleX(0.6875);">)</span>
<span class="t" id="t89" style="left:114.20px;top:684.82px;font-size:12.5px;letter-spacing:-0.393px;color:#444;">Sheet1</span>
<span class="t" id="t90" style="left:179.20px;top:684.82px;font-size:12.5px;letter-spacing:-0.373px;color:#444;">Sheet2</span>
<span class="t" id="t91" style="left:243.00px;top:684.82px;font-size:12.5px;letter-spacing:-0.088px;color:#217346;font-weight:bold;">Sheet3</span>
<span class="t" id="t92" style="left:9.40px;top:710.59px;font-size:11px;letter-spacing:-0.132px;color:#444;">Enter</span>
<span class="t" id="t93" style="left:51.30px;top:710.59px;font-size:11px;letter-spacing:0.295px;color:#444;">Workbook Statistics</span>
<span class="t" id="t94" style="left:192.50px;top:710.59px;font-size:11px;letter-spacing:0.116px;color:#444;">Accessibility: Investigate</span>
<span class="t" id="t95" style="left:1098.20px;top:710.49px;font-size:11px;letter-spacing:-0.584px;color:#a6a6a6;">300%</span>
<span class="t" id="t96" style="left:325.80px;top:568.27px;font-size:26.5px;letter-spacing:0.277px;color:#000;font-weight:bold;">Multiplication sign</span>
<span class="t" id="t97" style="left:632.80px;top:593.27px;font-size:26.5px;letter-spacing:0.098px;color:#000;font-weight:bold;">Cell address to be</span>
<span class="t" id="t98" style="left:682.30px;top:628.97px;font-size:26.5px;letter-spacing:0.706px;color:#000;font-weight:bold;">multiplied</span>
<span class="t" id="t99" style="left:862.00px;top:555.17px;font-size:26.5px;letter-spacing:0.132px;color:#000;font-weight:bold;">Closing Parenthesis</span><svg class="abs" style="left:0;top:0" width="1145" height="728" viewBox="0 0 1145 728"><path d="M561.5 573.2 L750.0 429.4" stroke="#000" stroke-width="3" fill="none"/><path d="M760.3 421.5 L749.1 438.2 L750.0 429.4 L741.3 427.9z" fill="#000"/><path d="M755.3 591.8 L781.0 444.8" stroke="#000" stroke-width="3" fill="none"/><path d="M783.2 432.0 L786.3 451.8 L781.0 444.8 L773.5 449.6z" fill="#000"/><path d="M961.6 551.5 L815.3 439.2" stroke="#000" stroke-width="3" fill="none"/><path d="M805.0 431.3 L824.0 437.7 L815.3 439.2 L816.1 448.0z" fill="#000"/></svg>
<div class="abs" id="lb"></div><div class="abs" id="rb"></div><div class="abs" id="bb"></div>
</body></html>
